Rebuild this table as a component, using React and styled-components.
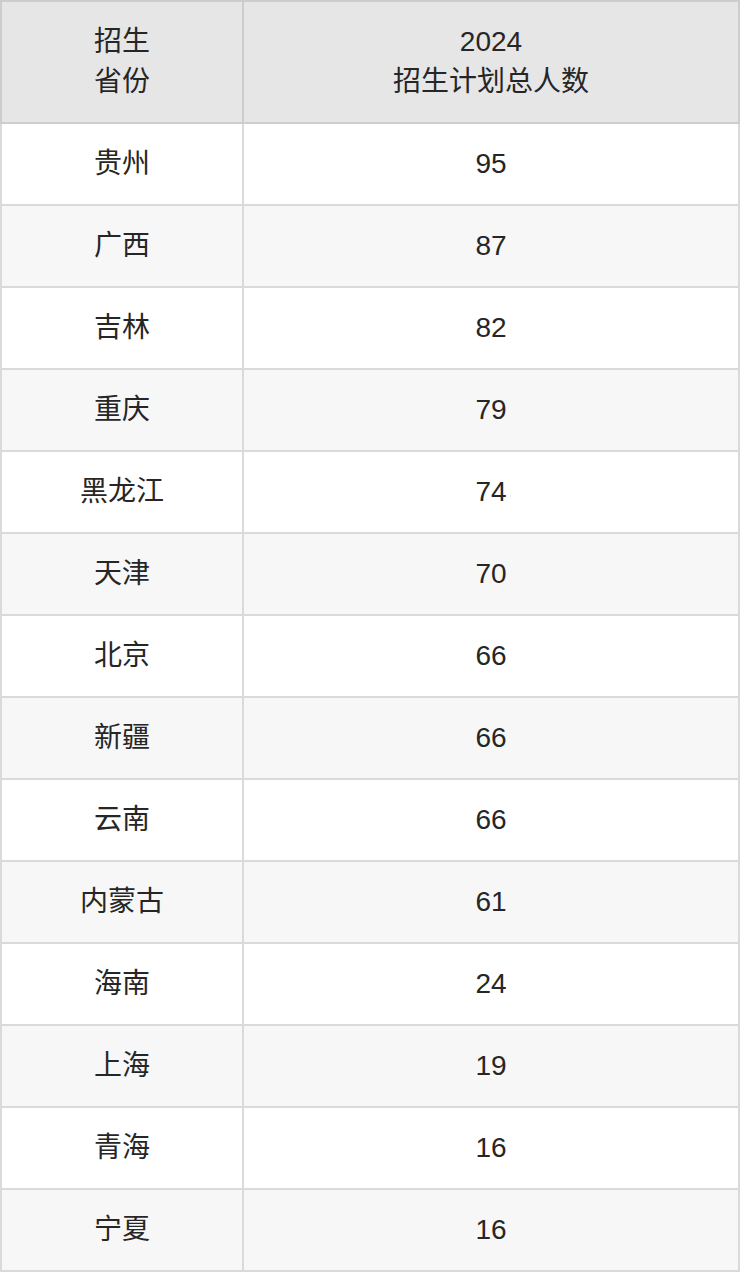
import React from "react";
import styled, { createGlobalStyle } from "styled-components";

const GlobalStyle = createGlobalStyle`
  html, body {
    margin: 0;
    padding: 0;
    background: #fff;
  }
  body {
    font-family: "Liberation Sans", "Noto Sans CJK SC", sans-serif;
  }
`;

const rows = [
  ["贵州", 95],
  ["广西", 87],
  ["吉林", 82],
  ["重庆", 79],
  ["黑龙江", 74],
  ["天津", 70],
  ["北京", 66],
  ["新疆", 66],
  ["云南", 66],
  ["内蒙古", 61],
  ["海南", 24],
  ["上海", 19],
  ["青海", 16],
  ["宁夏", 16]
];

const Table = styled.table`
  width: 740px;
  border-collapse: collapse;
  table-layout: fixed;
  color: #262626;
  font-size: 28px;
  line-height: 40px;
`;

const HeadRow = styled.tr`
  height: 122px;
  background: #e6e6e6;
`;

const HeadCell = styled.th`
  font-weight: normal;
  text-align: center;
  vertical-align: middle;
  padding: 0 10px;
  border: 2px solid #cdcdcd;
`;

const Row = styled.tr`
  height: 82px;
  background: ${(p) => (p.$striped ? "#f7f7f7" : "#fff")};
`;

const Cell = styled.td`
  text-align: center;
  vertical-align: middle;
  padding: 0 10px;
  border: 2px solid #dadada;
`;

export default function App() {
  return (
    <>
      <GlobalStyle />
      <Table>
        <colgroup>
          <col style={{ width: 242 }} />
          <col />
        </colgroup>
        <thead>
          <HeadRow>
            <HeadCell>
              招生
              <br />
              省份
            </HeadCell>
            <HeadCell>
              2024
              <br />
              招生计划总人数
            </HeadCell>
          </HeadRow>
        </thead>
        <tbody>
          {rows.map(([province, count], i) => (
            <Row key={province} $striped={i % 2 === 1}>
              <Cell>{province}</Cell>
              <Cell>{count}</Cell>
            </Row>
          ))}
        </tbody>
      </Table>
    </>
  );
}
